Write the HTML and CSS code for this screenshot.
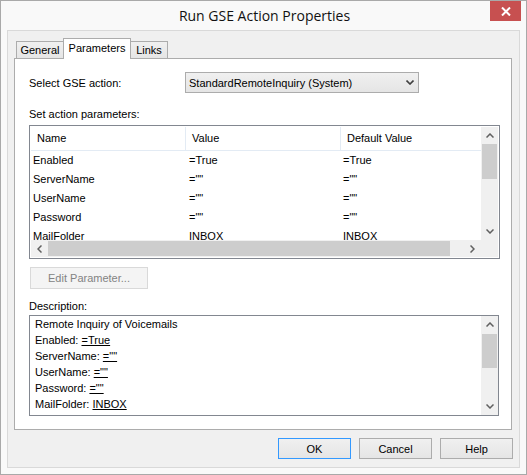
FILE: index.html
```html
<!DOCTYPE html>
<html lang="en">
  <head>
    <meta charset="UTF-8" />
    <title>Run GSE Action Properties</title>
    <link rel="stylesheet" href="styles.css">
  </head>
  <body>
    <div class="window">
      <div class="titlebar">
        <span></span>
        <div class="title">Run GSE Action Properties</div>
        <div class="close">
          <svg width="10" height="9" viewBox="0 0 10 9">
            <path d="M1 0.5 L9 8.5 M9 0.5 L1 8.5" stroke="#fff" stroke-width="2" fill="none" />
          </svg>
        </div>
      </div>

      <div class="client">
        <div class="tabs">
          <div class="tab tab-general">General</div>
          <div class="tab tab-params active">Parameters</div>
          <div class="tab tab-links">Links</div>
        </div>

        <div class="panel">
          <div class="field-row">
            <div class="field-label">Select GSE action:</div>
            <div class="combo">
              <span>StandardRemoteInquiry (System)</span>
              <svg width="8" height="5" viewBox="0 0 8 5">
                <path d="M0.5 0.5 L4 4 L7.5 0.5" stroke="#404040" stroke-width="1.6" fill="none" />
              </svg>
            </div>
          </div>

          <div class="caption caption-params">Set action parameters:</div>

          <div class="listview">
            <div class="lv-content">
              <div class="lv-header">
                <div class="lv-col col-name">Name</div>
                <div class="lv-col col-value">Value</div>
                <div class="lv-col col-default">Default Value</div>
              </div>
              <div class="lv-row">
                <div class="lv-cell col-name">Enabled</div>
                <div class="lv-cell col-value">=True</div>
                <div class="lv-cell col-default">=True</div>
              </div>
              <div class="lv-row">
                <div class="lv-cell col-name">ServerName</div>
                <div class="lv-cell col-value">=""</div>
                <div class="lv-cell col-default">=""</div>
              </div>
              <div class="lv-row">
                <div class="lv-cell col-name">UserName</div>
                <div class="lv-cell col-value">=""</div>
                <div class="lv-cell col-default">=""</div>
              </div>
              <div class="lv-row">
                <div class="lv-cell col-name">Password</div>
                <div class="lv-cell col-value">=""</div>
                <div class="lv-cell col-default">=""</div>
              </div>
              <div class="lv-row">
                <div class="lv-cell col-name">MailFolder</div>
                <div class="lv-cell col-value">INBOX</div>
                <div class="lv-cell col-default">INBOX</div>
              </div>
            </div>

            <div class="vscroll">
              <div class="sb-arrow">
                <svg width="8" height="5" viewBox="0 0 8 5"><path d="M0.5 4.5 L4 1 L7.5 4.5" stroke="#606060" stroke-width="1.5" fill="none" /></svg>
              </div>
              <div class="sb-thumb-v lv-thumb-v"></div>
              <div class="sb-track"></div>
              <div class="sb-arrow">
                <svg width="8" height="5" viewBox="0 0 8 5"><path d="M0.5 0.5 L4 4 L7.5 0.5" stroke="#606060" stroke-width="1.5" fill="none" /></svg>
              </div>
            </div>

            <div class="hscroll">
              <div class="sb-arrow">
                <svg width="5" height="8" viewBox="0 0 5 8"><path d="M4.5 0.5 L1 4 L4.5 7.5" stroke="#606060" stroke-width="1.5" fill="none" /></svg>
              </div>
              <div class="sb-thumb-h"></div>
              <div class="sb-track"></div>
              <div class="sb-arrow">
                <svg width="5" height="8" viewBox="0 0 5 8"><path d="M0.5 0.5 L4 4 L0.5 7.5" stroke="#606060" stroke-width="1.5" fill="none" /></svg>
              </div>
            </div>
            <div class="sb-corner"></div>
          </div>

          <div class="btn btn-disabled btn-edit">Edit Parameter...</div>

          <div class="caption caption-desc">Description:</div>

          <div class="description">
            <div class="desc-text">
              <div>Remote Inquiry of Voicemails</div>
              <div>Enabled: <u>=True</u></div>
              <div>ServerName: <u>=""</u></div>
              <div>UserName: <u>=""</u></div>
              <div>Password: <u>=""</u></div>
              <div>MailFolder: <u>INBOX</u></div>
            </div>
            <div class="vscroll">
              <div class="sb-arrow">
                <svg width="8" height="5" viewBox="0 0 8 5"><path d="M0.5 4.5 L4 1 L7.5 4.5" stroke="#606060" stroke-width="1.5" fill="none" /></svg>
              </div>
              <div class="sb-track desc-gap"></div>
              <div class="sb-thumb-v desc-thumb-v"></div>
              <div class="sb-track"></div>
              <div class="sb-arrow">
                <svg width="8" height="5" viewBox="0 0 8 5"><path d="M0.5 0.5 L4 4 L7.5 0.5" stroke="#606060" stroke-width="1.5" fill="none" /></svg>
              </div>
            </div>
          </div>
        </div>

        <div class="buttons">
          <div class="btn btn-default">OK</div>
          <div class="btn">Cancel</div>
          <div class="btn">Help</div>
        </div>
      </div>
    </div>
  </body>
</html>
```

FILE: styles.css
```css
* {
  box-sizing: border-box;
  margin: 0;
  padding: 0;
}

body {
  width: 527px;
  height: 475px;
  background: #ffffff;
  font-family: "Liberation Sans", Arial, sans-serif;
  font-size: 11px;
  color: #000;
}

.window {
  width: 527px;
  height: 475px;
  border: 1px solid #a9a9a9;
  background: #f9f9f9;
  display: flex;
  flex-direction: column;
}

.titlebar {
  height: 29px;
  display: grid;
  grid-template-columns: 1fr auto 1fr;
  align-items: start;
}

.title {
  font-family: "Open Sans", "Liberation Sans", sans-serif;
  font-size: 14px;
  line-height: 29px;
  color: #111;
  padding-left: 2px;
}

.close {
  justify-self: end;
  width: 31px;
  height: 20px;
  margin-right: 5px;
  background: #c75050;
  display: flex;
  justify-content: center;
  align-items: center;
}

.client {
  flex: 1;
  margin: 0 6px 6px 6px;
  border: 1px solid #d9d9d9;
  background: #f0f0f0;
  padding: 7px 6px 8px 6px;
  display: flex;
  flex-direction: column;
}

/* tabs */
.tabs {
  height: 20px;
  display: flex;
  align-items: flex-end;
  padding-left: 2px;
  position: relative;
  z-index: 1;
}

.tab {
  height: 17px;
  border: 1px solid #acacac;
  border-bottom: none;
  background: linear-gradient(#f0f0f0, #e5e5e5);
  text-align: center;
  line-height: 16px;
}

.tab-general {
  width: 47px;
  border-right: none;
}

.tab-params {
  width: 68px;
}

.tab-links {
  width: 37px;
  border-left: none;
}

.tab.active {
  height: 21px;
  margin-bottom: -1px;
  background: #ffffff;
  line-height: 18px;
}

.panel {
  width: 498px;
  height: 372px;
  border: 1px solid #acacac;
  background: #ffffff;
  padding: 13px 11px 0 14px;
  display: flex;
  flex-direction: column;
}

.field-row {
  display: flex;
  align-items: center;
  height: 21px;
}

.field-label {
  width: 156px;
  padding-top: 1px;
}

.combo {
  width: 234px;
  height: 21px;
  border: 1px solid #acacac;
  background: linear-gradient(#f0f0f0, #e5e5e5);
  display: flex;
  align-items: center;
  justify-content: space-between;
  padding: 0 4px 0 3px;
}

.caption {
  height: 14px;
  line-height: 14px;
}

.caption-params {
  margin-top: 14px;
}

.caption-desc {
  margin-top: 10px;
}

/* list view */
.listview {
  margin-top: 4px;
  width: 471px;
  height: 134px;
  border: 1px solid #828790;
  padding: 1px;
  display: grid;
  grid-template-columns: 450px 17px;
  grid-template-rows: 113px 17px;
}

.lv-content {
  overflow: hidden;
}

.lv-header {
  height: 24px;
  display: flex;
  border-bottom: 1px solid #e3ebf4;
}

.lv-col {
  line-height: 23px;
  padding-left: 6px;
  border-right: 1px solid #e3ebf4;
}

.lv-row {
  height: 19px;
  display: flex;
  line-height: 19px;
}

.lv-cell {
  padding-left: 2px;
  white-space: nowrap;
}

.col-name {
  width: 155px;
}

.col-value {
  width: 155px;
}

.lv-cell.col-value {
  padding-left: 3px;
}

.col-default {
  flex: 1;
  border-right: none;
}

.vscroll {
  background: #f0f0f0;
  display: flex;
  flex-direction: column;
}

.hscroll {
  background: #f0f0f0;
  display: flex;
}

.sb-arrow {
  width: 17px;
  height: 17px;
  flex: none;
  display: flex;
  justify-content: center;
  align-items: center;
}

.sb-track {
  flex: 1;
}

.sb-thumb-v {
  margin: 0 1px;
  background: #cdcdcd;
}

.lv-thumb-v {
  height: 35px;
}

.desc-gap {
  flex: none;
  height: 1px;
}

.desc-thumb-v {
  height: 34px;
}

.sb-thumb-h {
  width: 402px;
  margin: 1px 0;
  background: #cdcdcd;
}

.sb-corner {
  background: #f0f0f0;
}

/* buttons */
.btn {
  width: 73px;
  height: 21px;
  border: 1px solid #acacac;
  background: linear-gradient(#f0f0f0, #e5e5e5);
  display: flex;
  justify-content: center;
  align-items: center;
}

.btn-default {
  border-color: #3399ff;
}

.btn-edit {
  margin-top: 8px;
  width: 118px;
  height: 22px;
  margin-left: 1px;
}

.btn-disabled {
  border-color: #d9d9d9;
  background: #f4f4f4;
  color: #838383;
}

/* description */
.description {
  margin-top: 2px;
  width: 470px;
  height: 101px;
  border: 1px solid #828790;
  display: flex;
}

.desc-text {
  flex: 1;
  padding: 0 0 0 5px;
  line-height: 16px;
}

.description .vscroll {
  width: 17px;
}

.buttons {
  margin-top: 8px;
  display: flex;
  justify-content: flex-end;
  gap: 8px;
}
```
